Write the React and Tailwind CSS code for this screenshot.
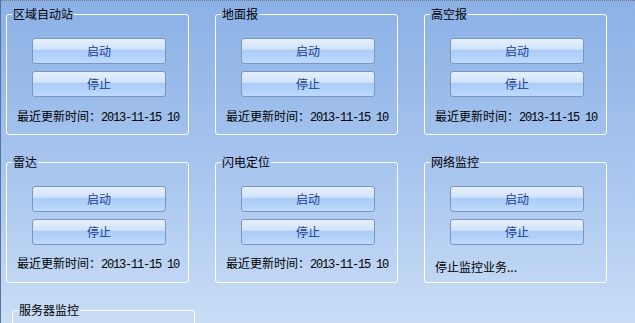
import React from "react";

const cjk = { fontFamily: '"Noto Sans CJK SC", "Noto Sans", sans-serif' };

const Btn = ({ children }) => (
  <button
    className="h-[26px] w-[134px] rounded-[3px] border border-[#7d96bd] bg-[linear-gradient(to_bottom,#e6f0fd_0%,#d2e3fb_42%,#acccf8_48%,#bcdafd_100%)] text-[12px] leading-[14px] text-[#1c3f90]"
  >
    {children}
  </button>
);

const Stamp = () => (
  <span className="whitespace-nowrap">
    最近更新时间：
    <span className="tracking-[-1.2px]" style={{ fontFamily: '"Liberation Mono", monospace' }}>
      2013-11-15 10
    </span>
  </span>
);

const Group = ({ title, children, textGap = "mt-[12px]", shift = "" }) => (
  <fieldset className={`h-[129px] w-[183px] min-w-0 rounded-[3px] border border-white ${shift}`}>
    <legend className="ml-[5px] px-px text-[12px] leading-[16px] text-black">{title}</legend>
    {children && (
      <div className="flex flex-col pt-[16px]">
        <div className="flex flex-col gap-[7px] pl-[25px]">
          <Btn>启动</Btn>
          <Btn>停止</Btn>
        </div>
        <div className={`pl-[10px] text-[12px] leading-[14px] text-black ${textGap}`}>{children}</div>
      </div>
    )}
  </fieldset>
);

export default function App() {
  return (
    <div
      className="h-[323px] w-[635px] overflow-hidden border-l border-[#55739f] bg-[linear-gradient(to_bottom,#8cb1e6_0%,#a6c4ee_50%,#c9ddf6_100%)]"
      style={cjk}
    >
      <div className="h-px w-full border-t border-dotted border-[#6f7580]" />
      <div className="flex flex-col gap-[19px] pl-[5px] pt-[5px]">
        <div className="grid grid-cols-[183px_183px_183px] gap-x-[26px]">
          <Group title="区域自动站"><Stamp /></Group>
          <Group title="地面报"><Stamp /></Group>
          <Group title="高空报"><Stamp /></Group>
        </div>
        <div className="grid grid-cols-[183px_183px_183px] gap-x-[26px]">
          <Group title="雷达" textGap="mt-[11px]"><Stamp /></Group>
          <Group title="闪电定位" textGap="mt-[11px]"><Stamp /></Group>
          <Group title="网络监控" textGap="mt-[15px]">
            <span>停止监控业务...</span>
          </Group>
        </div>
        <div className="flex">
          <Group title="服务器监控" shift="ml-[6px]" />
        </div>
      </div>
    </div>
  );
}
